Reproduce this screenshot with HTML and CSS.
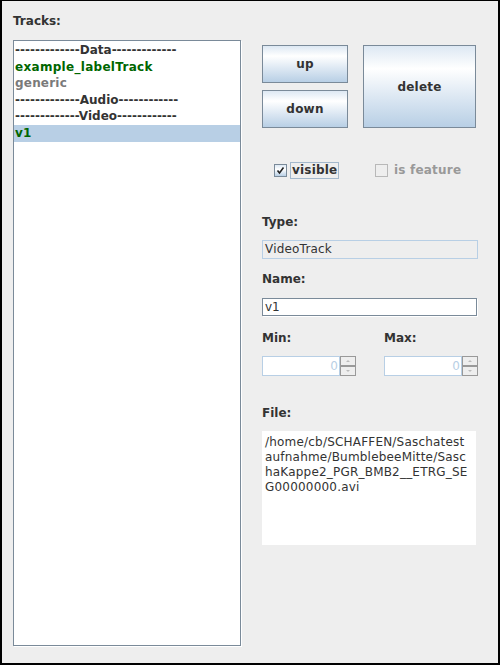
FILE: index.html
```html
<!DOCTYPE html>
<html>
<head>
<meta charset="utf-8">
<link rel="stylesheet" href="styles.css">
</head>
<body>
<div class="window">
  <div class="left">
    <div class="label tracks-label">Tracks:</div>
    <div class="list">
      <div class="row dark">-------------Data-------------</div>
      <div class="row green">example_labelTrack</div>
      <div class="row gray">generic</div>
      <div class="row dark">-------------Audio------------</div>
      <div class="row dark">-------------Video------------</div>
      <div class="row green selected">v1</div>
    </div>
  </div>
  <div class="right">
    <div class="buttons">
      <div class="btn btn-up">up</div>
      <div class="btn btn-down">down</div>
      <div class="btn btn-delete">delete</div>
    </div>
    <div class="checks">
      <div class="check">
        <span class="box">
          <svg width="11" height="11" viewBox="0 0 11 11"><path d="M2.5 5.5 L4.5 8 L8.5 2.5" fill="none" stroke="#222" stroke-width="1.6"/></svg>
        </span>
        <span class="check-label focus">visible</span>
      </div>
      <div class="check disabled">
        <span class="box"></span>
        <span class="check-label">is feature</span>
      </div>
    </div>
    <div class="label type-label">Type:</div>
    <div class="field readonly">VideoTrack</div>
    <div class="label name-label">Name:</div>
    <div class="field editable">v1</div>
    <div class="minmax">
      <div class="mm">
        <div class="label">Min:</div>
        <div class="spinner">
          <div class="spin-field">0</div>
          <div class="spin-btns">
            <div class="spin-btn"><span class="arr up"></span></div>
            <div class="spin-btn"><span class="arr down"></span></div>
          </div>
        </div>
      </div>
      <div class="mm">
        <div class="label">Max:</div>
        <div class="spinner">
          <div class="spin-field">0</div>
          <div class="spin-btns">
            <div class="spin-btn"><span class="arr up"></span></div>
            <div class="spin-btn"><span class="arr down"></span></div>
          </div>
        </div>
      </div>
    </div>
    <div class="label file-label">File:</div>
    <div class="filearea">/home/cb/SCHAFFEN/Saschatest<br>aufnahme/BumblebeeMitte/Sasc<br>haKappe2_PGR_BMB2__ETRG_SE<br>G00000000.avi</div>
  </div>
</div>
</body>
</html>
```
FILE: styles.css
```css
html, body {
  margin: 0;
  padding: 0;
  background: #eeeeee;
}
.window {
  box-sizing: border-box;
  width: 500px;
  height: 665px;
  border: 2px solid #000;
  border-top: 1px solid #000;
  background: #eeeeee;
  display: flex;
  font-family: "DejaVu Sans", sans-serif;
  font-size: 12px;
  color: #333333;
}
.label {
  font-weight: bold;
  line-height: 16px;
  height: 16px;
}
.left {
  margin-left: 11px;
  display: flex;
  flex-direction: column;
}
.tracks-label {
  margin-top: 12px;
}
.list {
  margin-top: 11px;
  box-sizing: border-box;
  width: 228px;
  height: 606px;
  border: 1px solid #7a8a99;
  box-shadow: 1px 1px 0 #fff;
  background: #fff;
  padding-top: 1px;
}
.row {
  height: 16.6px;
  line-height: 16.6px;
  padding-left: 1px;
  font-weight: bold;
  white-space: nowrap;
}
.dark { color: #333333; }
.green { color: #006600; letter-spacing: 0.3px; }
.gray { color: #7a7a7a; letter-spacing: 0.2px; }
.selected { background: #b8cfe5; }

.right {
  margin-left: 21px;
  width: 216px;
  display: flex;
  flex-direction: column;
}
.buttons {
  margin-top: 44px;
  display: grid;
  grid-template-columns: 86px 113px;
  grid-template-rows: 38px 38px;
  column-gap: 15px;
  row-gap: 7px;
}
.btn {
  box-sizing: border-box;
  border: 1px solid #7a8a99;
  background: linear-gradient(#dde8f3 0%, #ffffff 28%, #dde8f3 62%, #b8cfe5 100%);
  display: flex;
  align-items: center;
  justify-content: center;
  font-weight: bold;
  color: #333;
  letter-spacing: 0.2px;
}
.btn-up { grid-column: 1; grid-row: 1; }
.btn-down { grid-column: 1; grid-row: 2; }
.btn-delete { grid-column: 2; grid-row: 1 / span 2; }

.checks {
  margin-top: 34px;
  display: flex;
  height: 17px;
}
.check {
  display: flex;
  align-items: center;
}
.check:first-child {
  margin-left: 12px;
  width: 101px;
}
.box {
  box-sizing: border-box;
  width: 13px;
  height: 13px;
  border: 1px solid #7a8a99;
  background: linear-gradient(#dde8f3, #ffffff 40%, #b8cfe5);
  display: flex;
  align-items: center;
  justify-content: center;
}
.box svg { display: block; }
.check-label {
  font-weight: bold;
  margin-left: 3px;
  line-height: 15px;
  padding: 0 1px;
  border: 1px solid transparent;
  letter-spacing: 0.2px;
}
.focus { border-color: #a3b8cc; }
.disabled .box {
  border-color: #b8b8b8;
  background: #eeeeee;
}
.disabled .check-label { color: #999999; margin-left: 4px; }

.type-label { margin-top: 35px; }
.field {
  box-sizing: border-box;
  width: 216px;
  padding-left: 2px;
  white-space: nowrap;
}
.readonly {
  margin-top: 10px;
  height: 19px;
  line-height: 17px;
  border: 1px solid #b8cfe5;
  background: #eeeeee;
  letter-spacing: 0.2px;
}
.name-label { margin-top: 12px; }
.editable {
  margin-top: 11px;
  height: 18px;
  width: 215px;
  line-height: 16px;
  border: 1px solid #7a8a99;
  box-shadow: 1px 1px 0 #fff;
  background: #fff;
}
.minmax {
  margin-top: 14px;
  display: flex;
  gap: 28px;
}
.mm .label { margin-bottom: 10px; }
.spinner {
  display: flex;
  width: 94px;
  height: 20px;
}
.spin-field {
  box-sizing: border-box;
  flex: 1;
  height: 20px;
  border: 1px solid #b8cfe5;
  background: #fff;
  color: #b8cfe5;
  text-align: right;
  line-height: 18px;
  padding-right: 1px;
}
.spin-btns {
  width: 16px;
  display: flex;
  flex-direction: column;
}
.spin-btn {
  box-sizing: border-box;
  height: 10px;
  border: 1px solid #999999;
  background: #eeeeee;
  display: flex;
  align-items: center;
  justify-content: center;
}
.arr {
  width: 0;
  height: 0;
  border-left: 2px solid transparent;
  border-right: 2px solid transparent;
}
.arr.up { border-bottom: 2px solid #bbbbbb; }
.arr.down { border-top: 2px solid #bbbbbb; }

.file-label { margin-top: 29px; }
.filearea {
  margin-top: 10px;
  width: 214px;
  height: 114px;
  box-sizing: border-box;
  background: #fff;
  padding: 4px 3px;
  line-height: 15px;
  color: #333;
  white-space: nowrap;
  letter-spacing: 0.2px;
}
```
